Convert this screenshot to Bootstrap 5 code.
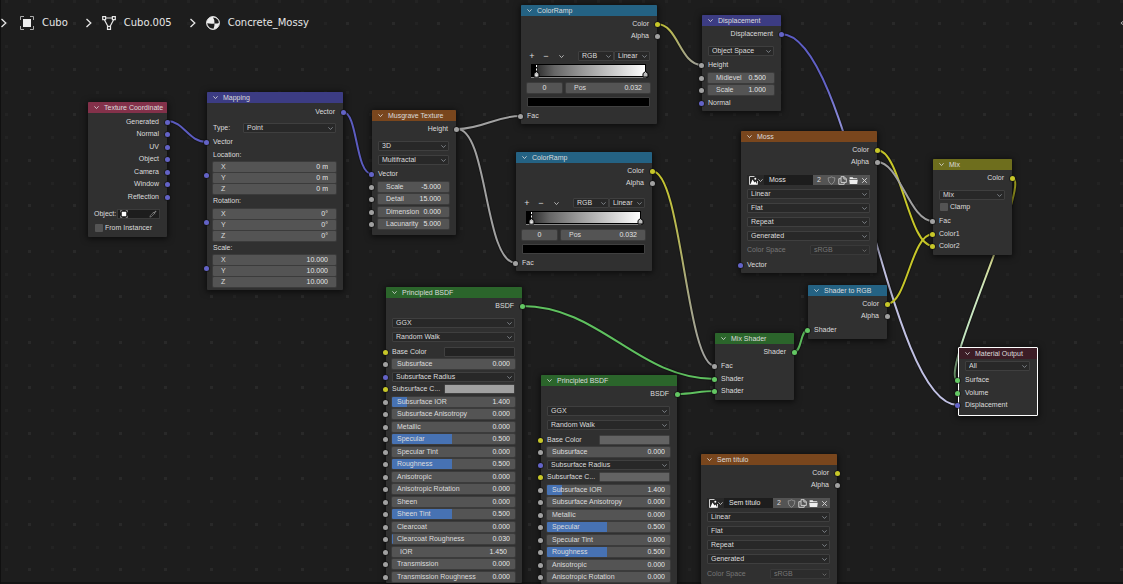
<!doctype html>
<html lang="en" data-bs-theme="dark">
<head>
<meta charset="utf-8">
<meta name="viewport" content="width=device-width, initial-scale=1">
<title>Shader Editor</title>
<link href="https://cdn.jsdelivr.net/npm/bootstrap@5.3.0/dist/css/bootstrap.min.css" rel="stylesheet">
<style>
body{background:#1d1d1d;color:#dcdcdc;font:7px/12px "Liberation Sans",sans-serif}
.editor{box-shadow:inset 1px 0 #101010,inset 0 -2px #141414}
.wires{fill:none;stroke-width:2}
.wires .edge{stroke:#111;stroke-width:4;opacity:.55}
.path-bar{top:13px;left:0;right:0;height:20px;font:10px/20px "DejaVu Sans",sans-serif}
.path-bar a{color:#e6e6e6}
.path-bar svg{fill:none;stroke:#e6e6e6}
.crumb-gap{margin:0 9px 0 17px}
.node{background:#303030;border-radius:1px;box-shadow:0 1px 6px 1px rgba(0,0,0,.6)}
.node-head{height:11px;line-height:11px;padding:0 6px;gap:5px;border-radius:1px 1px 0 0;white-space:nowrap}
.node-head svg,.tick{flex:none;width:5px;height:5px;fill:none;stroke:#ddd}
.line{height:12px;padding:0 7px 0 6px;position:relative;display:flex;align-items:center}
.out{justify-content:flex-end;padding-right:8px}
.seq>.line:nth-child(even){margin-bottom:1px}
.s1{margin-top:1px}.s2{margin-top:2px}.s3{margin-top:3px}.s4{margin-top:4px}.s5{margin-top:5px}.s6{margin-top:6px}.s8{margin-top:8px}
.e2{padding-bottom:2px}.e3{padding-bottom:3px}.e4{padding-bottom:4px}
/* sockets sit astride the node's edge */
.line::before{position:absolute;width:5px;height:5px;border-radius:50%;left:-3px;top:4px;background:var(--c);box-shadow:0 0 0 1px rgba(20,20,20,.6)}
.out::before{left:auto;right:-3px}
.vec::before,.gry::before,.yel::before,.grn::before{content:""}
.vec{--c:#6363c7}.gry{--c:#a1a1a1}.yel{--c:#c7c729}.grn{--c:#63c763}
.fld{flex:1;min-width:0;height:10px;line-height:10px;display:flex;align-items:center;padding:0 8px;background:#545454;border-radius:1px;box-shadow:0 0 0 1px #3b3b3b}
.fld input,.name-box{flex:1;min-width:0;width:0;height:10px;padding:0;border:0;background:none;color:#e4e4e4;font:inherit;text-align:right;outline:0}
.stop-no{flex:none;width:35px;padding:0;border:0;color:#e4e4e4;font:inherit;text-align:center}
.sld{padding:0 5px;background:linear-gradient(90deg,#4772b3 var(--v,0%),#545454 var(--v,0%))}
.pick{flex:1;width:auto;min-width:0;height:10px;min-height:0;padding:0 9px 0 3px;border:1px solid #3f3f3f;border-radius:1px;background-color:#282828;color:#dcdcdc;font:inherit;line-height:8px;background-position:right 2px center;background-size:5px 5px;--bs-form-select-bg-img:url("data:image/svg+xml,%3csvg xmlns='http://www.w3.org/2000/svg' viewBox='0 0 5 5'%3e%3cpath fill='none' stroke='%23ddd' d='M.7 1.7 2.5 3.5 4.3 1.7'/%3e%3c/svg%3e")}
.pick:disabled{background-color:#2c2c2c;color:#777;border-color:#393939;opacity:1;--bs-form-select-bg-img:url("data:image/svg+xml,%3csvg xmlns='http://www.w3.org/2000/svg' viewBox='0 0 5 5'%3e%3cpath fill='none' stroke='%23666' d='M.7 1.7 2.5 3.5 4.3 1.7'/%3e%3c/svg%3e")}
.pick-sm{flex:none;width:36px}
.pick-md{flex:none;width:60px}
.trio{margin-left:6px;margin-right:7px;gap:1px}
.trio .line{height:10px;padding:0}
.trio .line::before{left:-9px;top:0}
.tickbox{appearance:none;width:8px;height:8px;margin:0 2px 0 1px;background:#545454;border-radius:1px}
.swatch{appearance:none;height:10px;padding:0;border:1px solid #404040;border-radius:1px;background:none;overflow:hidden}
.swatch::-webkit-color-swatch-wrapper{padding:0}
.swatch::-webkit-color-swatch{border:0;border-radius:0}
.half{width:71px}
.tool{border:0;padding:0;background:none;color:#dcdcdc;font:inherit;height:10px;display:flex;align-items:center;justify-content:center}
.tool svg{fill:none;stroke:#cfcfcf}
.sign{width:10px;font-size:9px}
.block{background:#545454;width:11px}
.block svg{width:9px;height:9px}
.name-box{background:#1d1d1d;text-align:left;padding-left:5px}
.kind{width:17px;background:#282828}
.count{width:12px}
.picker{flex:none;width:43px;padding:0 2px;background:#1d1d1d;border:1px solid #3b3b3b;justify-content:space-between}
.type-label{width:30px}
.ramp{height:14px;margin-left:10px;margin-right:10px}
.ramp svg{display:block;width:100%;height:14px;overflow:visible}
.muted-label{color:#777}
.h-red{background:#83314a}.h-vec{background:#3c3c83}.h-tex{background:#79461d}.h-con{background:#246283}.h-shd{background:#2b652b}.h-col{background:#6e6e1d}.h-out{background:#3c1d26}
.w-s{width:79px}.w-m{width:84px}.w-l{width:136px}
.picked{width:80px;border:1px solid #fff}
.picked .line::before{left:-4px}
/* node places on the free canvas */
#n-coord{left:88px;top:102px}#n-map{left:207px;top:92px}#n-mus{left:372px;top:110px}
#n-ramp1{left:521px;top:5px}#n-ramp2{left:516px;top:152px}#n-disp{left:702px;top:15px}
#n-moss{left:741px;top:131px}#n-mix{left:933px;top:159px}#n-rgb{left:808px;top:285px}
#n-bsdf1{left:386px;top:287px}#n-bsdf2{left:541px;top:375px}#n-mixsh{left:715px;top:333px}
#n-img{left:701px;top:454px}#n-out{left:958px;top:347px}
</style>
</head>
<body>
<svg width="0" height="0" class="position-absolute" aria-hidden="true">
<symbol id="i-down" viewBox="0 0 5 5"><path d="M.4 1.3 2.5 3.6 4.6 1.3" stroke-width=".8"/></symbol>
<symbol id="i-image" viewBox="0 0 9 9"><path d="M5.500 .5H.5V8.500H8.500V5" stroke="#ccc"/><path d="M1.500 8 3.500 3.500 5.500 6.500 6.500 5.500 8 8Z" fill="#fff" stroke="none"/><circle cx="6.300" cy="2.800" r="1" fill="#fff" stroke="none"/></symbol>
<symbol id="i-shield" viewBox="0 0 9 9"><path d="M4.5 .8C3.5 1.6 2.3 1.8 1.2 1.8 1.2 5 2 7 4.5 8.3 7 7 7.8 5 7.8 1.8 6.7 1.8 5.5 1.6 4.5 .8Z" stroke="#999" stroke-width=".8"/></symbol>
<symbol id="i-copy" viewBox="0 0 9 9"><path d="M3 .7H6.2L8.3 2.8V6.4H3ZM5.9 .7V3H8.3M2.8 2.7H.8V8.3H6.2V6.6"/></symbol>
<symbol id="i-folder" viewBox="0 0 9 9"><path d="M.6 1.2H3.6L4.4 2.2H8.2V3H.6ZM.2 3.7H8.8L8.2 8H.8Z" fill="#eee" stroke="none"/></symbol>
<symbol id="i-x" viewBox="0 0 9 9"><path d="M2.2 2.2 6.8 6.8M6.8 2.2 2.2 6.8"/></symbol>
<symbol id="i-object" viewBox="0 0 9 9"><path d="M.5 2.500V.5H2.500M6.500 .5H8.500V2.500M8.500 6.500V8.500H6.500M2.500 8.500H.5V6.500" stroke="#888"/><path d="M2 2H7V7H2Z" fill="#fff" stroke="none"/></symbol>
<symbol id="i-dropper" viewBox="0 0 9 9"><path d="M1 8 1.500 6.300 5 2.800 6.200 4 2.700 7.500ZM4.300 2.200 6.800 4.700" stroke="#888" stroke-width=".8"/><path d="M5.300 3 7.200 .8Q8.500 .6 8.200 1.900L6 3.900Z" fill="#888" stroke="none"/></symbol>
<symbol id="i-next" viewBox="0 0 8 10"><path d="M1.5 1 5.8 5 1.5 9" stroke-width="1.3"/></symbol>
</svg>

<main class="editor position-relative vh-100 overflow-hidden">
<svg class="wires position-absolute top-0 start-0 w-100 h-100" aria-hidden="true">
<defs>
<pattern id="grid" width="91" height="91" patternUnits="userSpaceOnUse">
<path fill="#232323" d="M5 0h3v3h-3zM28 0h3v3h-3zM51 0h3v3h-3zM73 0h3v3h-3zM5 22h3v3h-3zM51 22h3v3h-3zM5 45h3v3h-3zM28 45h3v3h-3zM51 45h3v3h-3zM73 45h3v3h-3zM5 68h3v3h-3zM51 68h3v3h-3z"/>
<path fill="#292929" d="M28 22h3v3h-3zM73 22h3v3h-3zM28 68h3v3h-3zM73 68h3v3h-3z"/>
</pattern>
<linearGradient id="g-yg" gradientUnits="userSpaceOnUse" x1="657" y1="0" x2="702" y2="0"><stop stop-color="#c7c729"/><stop offset=".6" stop-color="#a8a880"/><stop offset="1" stop-color="#a1a1a1"/></linearGradient>
<linearGradient id="g-yg2" gradientUnits="userSpaceOnUse" x1="0" y1="171" x2="0" y2="366"><stop stop-color="#c7c729"/><stop offset=".6" stop-color="#a8a880"/><stop offset="1" stop-color="#a1a1a1"/></linearGradient>
<linearGradient id="g-vd" gradientUnits="userSpaceOnUse" x1="0" y1="34" x2="0" y2="406"><stop stop-color="#5c5cc4"/><stop offset=".14" stop-color="#6363c7"/><stop offset=".27" stop-color="#9c9ce0"/><stop offset=".6" stop-color="#c0c0e0"/><stop offset="1" stop-color="#c0c0e4"/></linearGradient>
<linearGradient id="g-ys" gradientUnits="userSpaceOnUse" x1="0" y1="178" x2="0" y2="380"><stop stop-color="#b0b020"/><stop offset=".12" stop-color="#9a9a20"/><stop offset=".4" stop-color="#d2d68c"/><stop offset=".55" stop-color="#d0e8c0"/><stop offset=".82" stop-color="#c0e4c0"/><stop offset="1" stop-color="#5f8f5f"/></linearGradient>
<path id="w1" d="M167 121C184 121 188 142 207 142"/>
<path id="w2" d="M343 112C358 112 355 174 372 174"/>
<path id="w3" d="M457 129C483 129 495 116 521 116"/>
<path id="w4" d="M457 129C488 129 484 263 516 263"/>
<path id="w5" d="M657 24C678 24 680 65 702 65"/>
<path id="w6" d="M652 171C682 171 686 366 715 366"/>
<path id="w7" d="M522 306C600 306 638 379 715 379"/>
<path id="w8" d="M677 394C692 394 700 391 715 391"/>
<path id="w9" d="M794 352C802 352 800 330 808 330"/>
<path id="w10" d="M887 304C907 304 911 234 933 234"/>
<path id="w11" d="M877 150C901 150 908 246 933 246"/>
<path id="w12" d="M877 162C900 162 909 221 933 221"/>
<path id="w13" d="M781 34C852 34 887 405 958 405"/>
<path id="w14" d="M1012 178C1034 178 936 380 958 380"/>
</defs>
<rect width="100%" height="100%" fill="url(#grid)"/>
<g class="edge"><use href="#w1"/><use href="#w2"/><use href="#w3"/><use href="#w4"/><use href="#w5"/><use href="#w6"/><use href="#w7"/><use href="#w8"/><use href="#w9"/><use href="#w10"/><use href="#w11"/><use href="#w12"/><use href="#w13"/><use href="#w14"/></g>
<g stroke="#5c5cc0"><use href="#w1"/><use href="#w2"/></g>
<use href="#w13" stroke="url(#g-vd)"/>
<g stroke="#c7c729"><use href="#w10"/><use href="#w11"/></g>
<g stroke="#a1a1a1"><use href="#w3"/><use href="#w4"/><use href="#w12"/></g>
<use href="#w5" stroke="url(#g-yg)"/><use href="#w6" stroke="url(#g-yg2)"/>
<g stroke="#5fc15f"><use href="#w7"/><use href="#w8"/><use href="#w9"/></g>
<use href="#w14" stroke="url(#g-ys)"/>
</svg>

<nav class="path-bar position-absolute d-flex align-items-center" aria-label="Context path">
<svg width="8" height="10"><use href="#i-next"/></svg>
<a href="#" class="d-flex align-items-center text-decoration-none ms-2 ps-1"><svg width="14" height="14" class="me-2" viewBox="0 0 14 14"><path d="M.5 4V.5H4M10 .5H13.500V4M13.500 10V13.500H10M4 13.500H.5V10" stroke="#aaa"/><rect x="3" y="3" width="8" height="8" fill="#eee" stroke="none"/></svg>Cubo</a>
<svg width="8" height="10" class="crumb-gap"><use href="#i-next"/></svg>
<a href="#" class="d-flex align-items-center text-decoration-none"><svg width="14" height="14" class="me-2" viewBox="0 0 14 14"><path d="M4 2H10M2.500 4 6 10.500M11.500 4 8 10.500M.7 .7H3.600V3.600H.7ZM10.400 .7H13.300V3.600H10.400ZM5.500 10.400H8.500V13.300H5.500Z" stroke-width="1.200"/></svg>Cubo.005</a>
<svg width="8" height="10" class="crumb-gap"><use href="#i-next"/></svg>
<a href="#" class="d-flex align-items-center text-decoration-none"><svg width="14" height="14" class="me-2" viewBox="0 0 14 14"><circle cx="7" cy="7" r="6.400" fill="#eee"/><path d="M7 1.500Q9 4 8.500 7.500 11 7.800 12.800 7 12.800 2 7 1.500ZM8.500 7.500Q5 8 1.200 7.300 2 12.300 7.500 12.800 8.700 10 8.500 7.500Z" fill="#1d1d1d" stroke="none"/></svg>Concrete_Mossy</a>
<svg width="4" height="8" class="ms-auto" viewBox="0 0 4 8"><path d="M4.500 2 2 4 4.500 6" stroke="#aaa"/></svg>
</nav>

<section class="node position-absolute w-s e3" id="n-coord">
<header class="node-head h-red d-flex align-items-center"><svg><use href="#i-down"/></svg>Texture Coordinate</header>
<div class="seq s3">
<div class="line out vec">Generated</div><div class="line out vec">Normal</div><div class="line out vec">UV</div><div class="line out vec">Object</div><div class="line out vec">Camera</div><div class="line out vec">Window</div><div class="line out vec">Reflection</div>
</div>
<div class="line s5"><span class="me-auto">Object:</span><button class="tool picker" aria-label="Pick object"><svg width="8" height="8"><use href="#i-object"/></svg><svg width="8" height="8"><use href="#i-dropper"/></svg></button></div>
<div class="line s2"><label class="d-flex align-items-center"><input type="checkbox" class="tickbox">From Instancer</label></div>
</section>

<section class="node position-absolute w-l e3" id="n-map">
<header class="node-head h-vec d-flex align-items-center"><svg><use href="#i-down"/></svg>Mapping</header>
<div class="line out vec s3">Vector</div>
<div class="line s4"><label for="m-type" class="type-label">Type:</label><select id="m-type" class="form-select pick"><option>Point</option></select></div>
<div class="line vec s2">Vector</div>
<div class="line s1">Location:</div>
<div class="trio d-flex flex-column s1">
<div class="line"><label class="fld">X<input value="0 m"></label></div><div class="line vec"><label class="fld">Y<input value="0 m"></label></div><div class="line"><label class="fld">Z<input value="0 m"></label></div></div>
<div class="line s1">Rotation:</div>
<div class="trio d-flex flex-column s2">
<div class="line"><label class="fld">X<input value="0°"></label></div><div class="line vec"><label class="fld">Y<input value="0°"></label></div><div class="line"><label class="fld">Z<input value="0°"></label></div></div>
<div class="line s1">Scale:</div>
<div class="trio d-flex flex-column s1">
<div class="line"><label class="fld">X<input value="10.000"></label></div><div class="line vec"><label class="fld">Y<input value="10.000"></label></div><div class="line"><label class="fld">Z<input value="10.000"></label></div></div>
</section>

<section class="node position-absolute w-m e4" id="n-mus">
<header class="node-head h-tex d-flex align-items-center"><svg><use href="#i-down"/></svg>Musgrave Texture</header>
<div class="line out gry s2">Height</div>
<div class="line s5"><select class="form-select pick" aria-label="Dimensions"><option>3D</option></select></div>
<div class="line s2"><select class="form-select pick" aria-label="Musgrave type"><option>Multifractal</option></select></div>
<div class="line vec s2">Vector</div>
<div class="seq s1">
<div class="line gry"><label class="fld">Scale<input value="-5.000"></label></div><div class="line gry"><label class="fld">Detail<input value="15.000"></label></div><div class="line gry"><label class="fld">Dimension<input value="0.000"></label></div><div class="line gry"><label class="fld">Lacunarity<input value="5.000"></label></div>
</div>
</section>

<section class="node position-absolute w-l e2" id="n-ramp1">
<header class="node-head h-con d-flex align-items-center"><svg><use href="#i-down"/></svg>ColorRamp</header>
<div class="line out yel s2">Color</div><div class="line out gry">Alpha</div>
<div class="line s8"><button class="tool sign" aria-label="Add stop">+</button><button class="tool sign ms-1" aria-label="Remove stop">−</button><button class="tool ms-2 me-auto" aria-label="Ramp tools"><svg class="tick"><use href="#i-down"/></svg></button><select class="form-select pick pick-sm" aria-label="Color mode"><option>RGB</option></select><select class="form-select pick pick-sm" aria-label="Interpolation"><option>Linear</option></select></div>
<div class="ramp s2"><svg viewBox="0 0 116 14"><defs><linearGradient id="rampfill"><stop offset=".035" stop-color="#000"/><stop offset=".06" stop-color="#333"/><stop offset=".2" stop-color="#666"/><stop offset=".45" stop-color="#999"/><stop offset=".75" stop-color="#d0d0d0"/><stop offset="1" stop-color="#fff"/></linearGradient>
<g id="rampart"><rect x=".5" y=".5" width="114" height="12" fill="url(#rampfill)" stroke="#000"/><path d="M0 13.500H115" stroke="#888"/><path d="M5.500 1V8" stroke="#fff" stroke-dasharray="2 1.500"/><path d="M3 13V9.500L5.500 7.500 8 9.500V13ZM112 13V9.500L114.500 7.500 117 9.500V13Z" fill="#bbb" stroke="#000"/><path d="M4.500 10.500H6.500V12.500H4.500Z" fill="#eee"/></g></defs><use href="#rampart"/></svg></div>
<div class="line s4"><input class="fld stop-no" value="0" aria-label="Active stop"><label class="fld ms-1">Pos<input value="0.032"></label></div>
<div class="line s2"><input type="color" class="swatch flex-fill" value="#000000" aria-label="Stop color"></div>
<div class="line gry s2">Fac</div>
</section>

<section class="node position-absolute w-l e2" id="n-ramp2">
<header class="node-head h-con d-flex align-items-center"><svg><use href="#i-down"/></svg>ColorRamp</header>
<div class="line out yel s2">Color</div><div class="line out gry">Alpha</div>
<div class="line s8"><button class="tool sign" aria-label="Add stop">+</button><button class="tool sign ms-1" aria-label="Remove stop">−</button><button class="tool ms-2 me-auto" aria-label="Ramp tools"><svg class="tick"><use href="#i-down"/></svg></button><select class="form-select pick pick-sm" aria-label="Color mode"><option>RGB</option></select><select class="form-select pick pick-sm" aria-label="Interpolation"><option>Linear</option></select></div>
<div class="ramp s2"><svg viewBox="0 0 116 14"><use href="#rampart"/></svg></div>
<div class="line s4"><input class="fld stop-no" value="0" aria-label="Active stop"><label class="fld ms-1">Pos<input value="0.032"></label></div>
<div class="line s2"><input type="color" class="swatch flex-fill" value="#000000" aria-label="Stop color"></div>
<div class="line gry s2">Fac</div>
</section>

<section class="node position-absolute w-s e2" id="n-disp">
<header class="node-head h-vec d-flex align-items-center"><svg><use href="#i-down"/></svg>Displacement</header>
<div class="line out vec s2">Displacement</div>
<div class="line s5"><select class="form-select pick" aria-label="Space"><option>Object Space</option></select></div>
<div class="line gry s2">Height</div>
<div class="seq s1"><div class="line gry"><label class="fld">Midlevel<input value="0.500"></label></div><div class="line gry"><label class="fld">Scale<input value="1.000"></label></div><div class="line vec">Normal</div></div>
</section>

<section class="node position-absolute w-l e2" id="n-moss">
<header class="node-head h-tex d-flex align-items-center"><svg><use href="#i-down"/></svg>Moss</header>
<div class="line out yel s2">Color</div><div class="line out gry">Alpha</div>
<div class="line s6"><button class="tool kind" aria-label="Browse image"><svg width="9" height="9"><use href="#i-image"/></svg><svg class="tick"><use href="#i-down"/></svg></button><input class="name-box" value="Moss" aria-label="Image name"><button class="tool block count">2</button><button class="tool block count" aria-label="Fake user"><svg><use href="#i-shield"/></svg></button><button class="tool block" aria-label="New image"><svg><use href="#i-copy"/></svg></button><button class="tool block" aria-label="Open image"><svg><use href="#i-folder"/></svg></button><button class="tool block" aria-label="Unlink"><svg><use href="#i-x"/></svg></button></div>
<div class="line s2"><select class="form-select pick" aria-label="Interpolation"><option>Linear</option></select></div>
<div class="line s2"><select class="form-select pick" aria-label="Projection"><option>Flat</option></select></div>
<div class="line s2"><select class="form-select pick" aria-label="Extension"><option>Repeat</option></select></div>
<div class="line s2"><select class="form-select pick" aria-label="Source"><option>Generated</option></select></div>
<div class="line s2"><label class="muted-label me-auto" for="cs1">Color Space</label><select id="cs1" class="form-select pick pick-md" disabled><option>sRGB</option></select></div>
<div class="line vec s3">Vector</div>
</section>

<section class="node position-absolute w-s e3" id="n-mix">
<header class="node-head h-col d-flex align-items-center"><svg><use href="#i-down"/></svg>Mix</header>
<div class="line out yel s2">Color</div>
<div class="line s5"><select class="form-select pick" aria-label="Blend mode"><option>Mix</option></select></div>
<div class="line"><label class="d-flex align-items-center"><input type="checkbox" class="tickbox">Clamp</label></div>
<div class="line gry s2">Fac</div>
<div class="line yel s1">Color1</div><div class="line yel">Color2</div>
</section>

<section class="node position-absolute w-s e3" id="n-rgb">
<header class="node-head h-con d-flex align-items-center"><svg><use href="#i-down"/></svg>Shader to RGB</header>
<div class="line out yel s2">Color</div><div class="line out gry">Alpha</div><div class="line grn s2">Shader</div>
</section>

<section class="node position-absolute w-l" id="n-bsdf1">
<header class="node-head h-shd d-flex align-items-center"><svg><use href="#i-down"/></svg>Principled BSDF</header>
<div class="line out grn s2">BSDF</div>
<div class="line s5"><select class="form-select pick" aria-label="Distribution"><option>GGX</option></select></div>
<div class="line s2"><select class="form-select pick" aria-label="Subsurface method"><option>Random Walk</option></select></div>
<div class="seq s3">
<div class="line yel"><label class="me-auto" for="bc1">Base Color</label><input type="color" id="bc1" class="swatch half" value="#232323"></div>
<div class="line gry"><label class="fld sld">Subsurface<input value="0.000"></label></div>
<div class="line vec"><select class="form-select pick" aria-label="Subsurface Radius"><option>Subsurface Radius</option></select></div>
<div class="line yel"><label class="me-auto" for="sc1">Subsurface C...</label><input type="color" id="sc1" class="swatch half" value="#a0a0a0"></div>
<div class="line gry"><label class="fld sld" style="--v:12%">Subsurface IOR<input value="1.400"></label></div>
<div class="line gry"><label class="fld sld">Subsurface Anisotropy<input value="0.000"></label></div>
<div class="line gry"><label class="fld sld">Metallic<input value="0.000"></label></div>
<div class="line gry"><label class="fld sld" style="--v:49%">Specular<input value="0.500"></label></div>
<div class="line gry"><label class="fld sld">Specular Tint<input value="0.000"></label></div>
<div class="line gry"><label class="fld sld" style="--v:49%">Roughness<input value="0.500"></label></div>
<div class="line gry"><label class="fld sld">Anisotropic<input value="0.000"></label></div>
<div class="line gry"><label class="fld sld">Anisotropic Rotation<input value="0.000"></label></div>
<div class="line gry"><label class="fld sld">Sheen<input value="0.000"></label></div>
<div class="line gry"><label class="fld sld" style="--v:49%">Sheen Tint<input value="0.500"></label></div>
<div class="line gry"><label class="fld sld">Clearcoat<input value="0.000"></label></div>
<div class="line gry"><label class="fld sld" style="--v:1%">Clearcoat Roughness<input value="0.030"></label></div>
<div class="line gry"><label class="fld">IOR<input value="1.450"></label></div>
<div class="line gry"><label class="fld sld">Transmission<input value="0.000"></label></div>
<div class="line gry"><label class="fld sld">Transmission Roughness<input value="0.000"></label></div>
</div>
</section>

<section class="node position-absolute w-l" id="n-bsdf2">
<header class="node-head h-shd d-flex align-items-center"><svg><use href="#i-down"/></svg>Principled BSDF</header>
<div class="line out grn s2">BSDF</div>
<div class="line s5"><select class="form-select pick" aria-label="Distribution"><option>GGX</option></select></div>
<div class="line s2"><select class="form-select pick" aria-label="Subsurface method"><option>Random Walk</option></select></div>
<div class="seq s3">
<div class="line yel"><label class="me-auto" for="bc2">Base Color</label><input type="color" id="bc2" class="swatch half" value="#636363"></div>
<div class="line gry"><label class="fld sld">Subsurface<input value="0.000"></label></div>
<div class="line vec"><select class="form-select pick" aria-label="Subsurface Radius"><option>Subsurface Radius</option></select></div>
<div class="line yel"><label class="me-auto" for="sc2">Subsurface C...</label><input type="color" id="sc2" class="swatch half" value="#636363"></div>
<div class="line gry"><label class="fld sld" style="--v:12%">Subsurface IOR<input value="1.400"></label></div>
<div class="line gry"><label class="fld sld">Subsurface Anisotropy<input value="0.000"></label></div>
<div class="line gry"><label class="fld sld">Metallic<input value="0.000"></label></div>
<div class="line gry"><label class="fld sld" style="--v:49%">Specular<input value="0.500"></label></div>
<div class="line gry"><label class="fld sld">Specular Tint<input value="0.000"></label></div>
<div class="line gry"><label class="fld sld" style="--v:49%">Roughness<input value="0.500"></label></div>
<div class="line gry"><label class="fld sld">Anisotropic<input value="0.000"></label></div>
<div class="line gry"><label class="fld sld">Anisotropic Rotation<input value="0.000"></label></div>
</div>
</section>

<section class="node position-absolute w-s e3" id="n-mixsh">
<header class="node-head h-shd d-flex align-items-center"><svg><use href="#i-down"/></svg>Mix Shader</header>
<div class="line out grn s2">Shader</div>
<div class="line gry s2">Fac</div><div class="line grn s1">Shader</div><div class="line grn">Shader</div>
</section>

<section class="node position-absolute w-l e4" id="n-img">
<header class="node-head h-tex d-flex align-items-center"><svg><use href="#i-down"/></svg>Sem título</header>
<div class="line out yel s2">Color</div><div class="line out gry">Alpha</div>
<div class="line s6"><button class="tool kind" aria-label="Browse image"><svg width="9" height="9"><use href="#i-image"/></svg><svg class="tick"><use href="#i-down"/></svg></button><input class="name-box" value="Sem título" aria-label="Image name"><button class="tool block count">2</button><button class="tool block count" aria-label="Fake user"><svg><use href="#i-shield"/></svg></button><button class="tool block" aria-label="New image"><svg><use href="#i-copy"/></svg></button><button class="tool block" aria-label="Open image"><svg><use href="#i-folder"/></svg></button><button class="tool block" aria-label="Unlink"><svg><use href="#i-x"/></svg></button></div>
<div class="line s2"><select class="form-select pick" aria-label="Interpolation"><option>Linear</option></select></div>
<div class="line s2"><select class="form-select pick" aria-label="Projection"><option>Flat</option></select></div>
<div class="line s2"><select class="form-select pick" aria-label="Extension"><option>Repeat</option></select></div>
<div class="line s2"><select class="form-select pick" aria-label="Source"><option>Generated</option></select></div>
<div class="line s3"><label class="muted-label me-auto" for="cs2">Color Space</label><select id="cs2" class="form-select pick pick-md" disabled><option>sRGB</option></select></div>
</section>

<section class="node position-absolute picked e4" id="n-out">
<header class="node-head h-out d-flex align-items-center"><svg><use href="#i-down"/></svg>Material Output</header>
<div class="line s1"><select class="form-select pick" aria-label="Target"><option>All</option></select></div>
<div class="line grn s2">Surface</div><div class="line grn s1">Volume</div><div class="line vec">Displacement</div>
</section>
</main>
<script src="https://cdn.jsdelivr.net/npm/bootstrap@5.3.0/dist/js/bootstrap.bundle.min.js"></script>
</body>
</html>
